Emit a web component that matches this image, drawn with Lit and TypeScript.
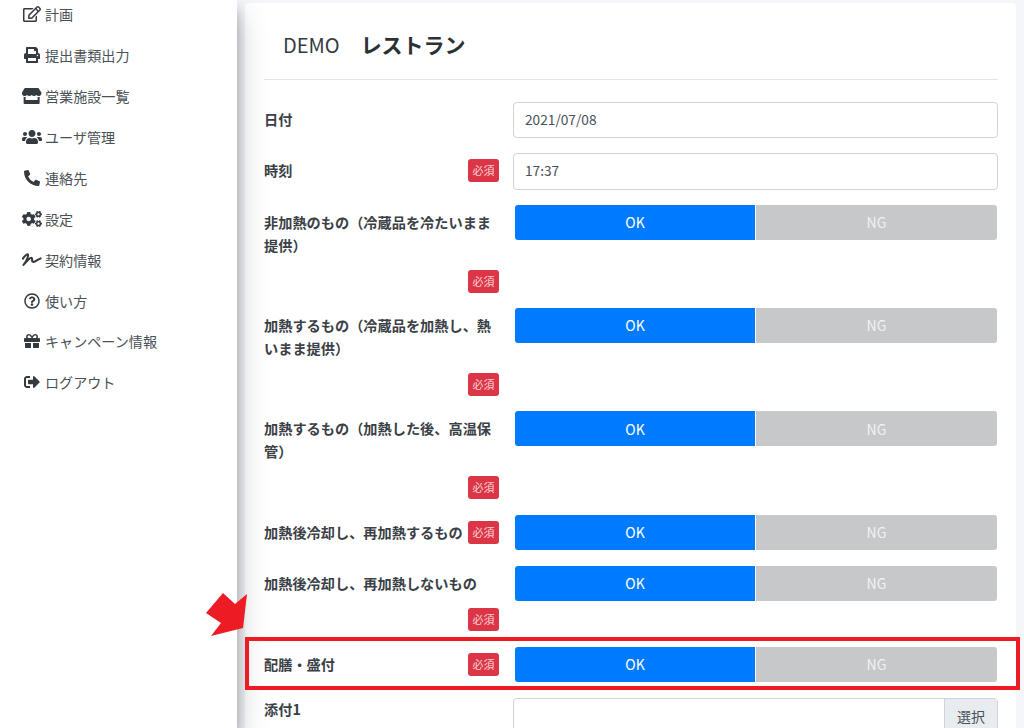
import { LitElement, html, css, svg } from "lit";
import { customElement } from "lit/decorators.js";

const PATHS: Record<string, [number, string]> = {
  edit: [576, "M402.3 344.9l32-32c5-5 13.7-1.5 13.7 5.7V464c0 26.5-21.5 48-48 48H48c-26.5 0-48-21.5-48-48V112c0-26.5 21.5-48 48-48h273.5c7.1 0 10.7 8.6 5.7 13.7l-32 32c-1.5 1.5-3.5 2.3-5.7 2.3H48v352h352V350.5c0-2.1.8-4.1 2.3-5.6zm156.6-201.8L296.3 405.7l-90.4 10c-26.2 2.9-48.5-19.2-45.6-45.6l10-90.4L432.9 17.1c22.9-22.9 59.9-22.9 82.7 0l43.2 43.2c22.9 22.9 22.9 60 .1 82.8zM460.1 174L402 115.9 216.2 301.8l-7.3 65.3 65.3-7.3L460.1 174zm64.8-79.7l-43.2-43.2c-4.1-4.1-10.8-4.1-14.8 0L436 82l58.1 58.1 30.9-30.9c4-4.2 4-10.8-.1-14.9z"],
  print: [512, "M448 192V77.25c0-8.49-3.37-16.62-9.37-22.63L393.37 9.37c-6-6-14.14-9.37-22.63-9.37H96C78.33 0 64 14.33 64 32v160c-35.35 0-64 28.65-64 64v112c0 8.84 7.16 16 16 16h48v96c0 17.67 14.33 32 32 32h320c17.67 0 32-14.33 32-32v-96h48c8.84 0 16-7.16 16-16V256c0-35.35-28.65-64-64-64zm-64 256H128v-96h256v96zm0-224H128V64h192v48c0 8.84 7.16 16 16 16h48v96zm48 72c-13.25 0-24-10.75-24-24 0-13.26 10.75-24 24-24s24 10.74 24 24c0 13.25-10.75 24-24 24z"],
  store: [616, "M602 118.6L537.1 15C531.3 5.7 521 0 510 0H106C95 0 84.7 5.7 78.9 15L14 118.6c-33.9 54.1-3.9 129.3 59.4 137.9 4.6.6 9.2.9 13.7.9 29.9 0 56.4-13.1 74.6-33.4 18.2 20.3 44.8 33.4 74.6 33.4 29.9 0 56.4-13.1 74.6-33.4 18.2 20.3 44.8 33.4 74.6 33.4 30 0 56.4-13.1 74.6-33.4 18.3 20.3 44.8 33.4 74.6 33.4 4.6 0 9.1-.3 13.7-.9 63.5-8.5 93.6-83.7 59.6-137.9zM529.5 288c-10 0-19.9-1.5-29.5-3.8V384H116v-99.8c-9.6 2.2-19.5 3.8-29.5 3.8-6 0-12.1-.4-18-1.2-5.6-.8-11.1-2.1-16.4-3.6V480c0 17.7 14.3 32 32 32h448c17.7 0 32-14.3 32-32V283.2c-5.4 1.6-10.8 2.9-16.4 3.6-6.1.8-12.1 1.2-18.2 1.2z"],
  users: [640, "M96 224c35.3 0 64-28.7 64-64s-28.7-64-64-64-64 28.7-64 64 28.7 64 64 64zm448 0c35.3 0 64-28.7 64-64s-28.7-64-64-64-64 28.7-64 64 28.7 64 64 64zm32 32h-64c-17.6 0-33.5 7.1-45.1 18.6 40.3 22.1 68.9 62 75.1 109.4h66c17.7 0 32-14.3 32-32v-32c0-35.3-28.7-64-64-64zm-256 0c61.9 0 112-50.1 112-112S381.9 32 320 32 208 82.1 208 144s50.1 112 112 112zm76.8 32h-8.3c-20.8 10-43.9 16-68.5 16s-47.6-6-68.5-16h-8.3C179.6 288 128 339.6 128 403.2V432c0 26.5 21.5 48 48 48h288c26.5 0 48-21.5 48-48v-28.8c0-63.6-51.6-115.2-115.2-115.2zm-223.7-13.4C161.5 263.1 145.6 256 128 256H64c-35.3 0-64 28.7-64 64v32c0 17.7 14.3 32 32 32h65.9c6.3-47.4 34.9-87.3 75.2-109.4z"],
  phone: [512, "M497.39 361.8l-112-48a24 24 0 0 0-28 6.9l-49.6 60.6A370.66 370.66 0 0 1 130.6 204.11l60.6-49.6a23.94 23.94 0 0 0 6.9-28l-48-112A24.16 24.16 0 0 0 122.6.61l-104 24A24 24 0 0 0 0 48c0 256.5 207.9 464 464 464a24 24 0 0 0 23.4-18.6l24-104a24.29 24.29 0 0 0-14.01-27.6z"],
  cogs: [640, "M512.1 191l-8.2 14.3c-3 5.3-9.4 7.5-15.1 5.4-11.8-4.4-22.6-10.7-32.1-18.6-4.6-3.8-5.8-10.5-2.8-15.7l8.2-14.3c-6.9-8-12.3-17.3-15.9-27.4h-16.5c-6 0-11.2-4.3-12.2-10.3-2-12-2.1-24.6 0-37.1 1-6 6.2-10.4 12.2-10.4h16.5c3.6-10.1 9-19.4 15.9-27.4l-8.2-14.3c-3-5.2-1.9-11.9 2.8-15.7 9.5-7.9 20.4-14.2 32.1-18.6 5.7-2.1 12.1.1 15.1 5.4l8.2 14.3c10.5-1.9 21.2-1.9 31.7 0L552 6.3c3-5.3 9.4-7.5 15.1-5.4 11.8 4.4 22.6 10.7 32.1 18.6 4.6 3.8 5.8 10.5 2.8 15.7l-8.2 14.3c6.9 8 12.3 17.3 15.9 27.4h16.5c6 0 11.2 4.3 12.2 10.3 2 12 2.1 24.6 0 37.1-1 6-6.2 10.4-12.2 10.4h-16.5c-3.6 10.1-9 19.4-15.9 27.4l8.2 14.3c3 5.2 1.9 11.9-2.8 15.7-9.5 7.9-20.4 14.2-32.1 18.6-5.7 2.1-12.1-.1-15.1-5.4l-8.2-14.3c-10.4 1.9-21.2 1.9-31.7 0zm-10.5-58.8c38.5 29.6 82.4-14.3 52.8-52.8-38.5-29.7-82.4 14.3-52.8 52.8zM386.3 286.1l33.7 16.8c10.1 5.8 14.5 18.1 10.5 29.1-8.9 24.2-26.4 46.4-42.6 65.8-7.4 8.9-20.2 11.1-30.3 5.3l-29.1-16.8c-16 13.7-34.6 24.6-54.9 31.7v33.6c0 11.6-8.3 21.6-19.7 23.6-24.6 4.2-50.4 4.4-75.9 0-11.5-2-20-11.9-20-23.6V418c-20.3-7.2-38.9-18-54.9-31.7L74 403c-10 5.8-22.9 3.6-30.3-5.3-16.2-19.4-33.3-41.6-42.2-65.7-4-10.9.4-23.2 10.5-29.1l33.3-16.8c-3.9-20.9-3.9-42.4 0-63.4L12 205.8c-10.1-5.8-14.6-18.1-10.5-29 8.9-24.2 26-46.4 42.2-65.8 7.4-8.9 20.2-11.1 30.3-5.3l29.1 16.8c16-13.7 34.6-24.6 54.9-31.7V57.1c0-11.5 8.2-21.5 19.6-23.5 24.6-4.2 50.5-4.4 76-.1 11.5 2 20 11.9 20 23.6v33.6c20.3 7.2 38.9 18 54.9 31.7l29.1-16.8c10-5.8 22.9-3.6 30.3 5.3 16.2 19.4 33.2 41.6 42.1 65.8 4 10.9.1 23.2-10 29.1l-33.7 16.8c3.9 21 3.9 42.5 0 63.5zm-117.6 21.1c59.2-77-28.7-164.9-105.7-105.7-59.2 77 28.7 164.9 105.7 105.7zm243.4 182.7l-8.2 14.3c-3 5.3-9.4 7.5-15.1 5.4-11.8-4.4-22.6-10.7-32.1-18.6-4.6-3.8-5.8-10.5-2.8-15.7l8.2-14.3c-6.9-8-12.3-17.3-15.9-27.4h-16.5c-6 0-11.2-4.3-12.2-10.3-2-12-2.1-24.6 0-37.1 1-6 6.2-10.4 12.2-10.4h16.5c3.6-10.1 9-19.4 15.9-27.4l-8.2-14.3c-3-5.2-1.9-11.9 2.8-15.7 9.5-7.9 20.4-14.2 32.1-18.6 5.7-2.1 12.1.1 15.1 5.4l8.2 14.3c10.5-1.9 21.2-1.9 31.7 0l8.2-14.3c3-5.3 9.4-7.5 15.1-5.4 11.8 4.4 22.6 10.7 32.1 18.6 4.6 3.8 5.8 10.5 2.8 15.7l-8.2 14.3c6.9 8 12.3 17.3 15.9 27.4h16.5c6 0 11.2 4.3 12.2 10.3 2 12 2.1 24.6 0 37.1-1 6-6.2 10.4-12.2 10.4h-16.5c-3.6 10.1-9 19.4-15.9 27.4l8.2 14.3c3 5.2 1.9 11.9-2.8 15.7-9.5 7.9-20.4 14.2-32.1 18.6-5.7 2.1-12.1-.1-15.1-5.4l-8.2-14.3c-10.4 1.9-21.2 1.9-31.7 0zM501.6 431c38.5 29.6 82.4-14.3 52.8-52.8-38.5-29.6-82.4 14.3-52.8 52.8z"],
  question: [512, "M256 8C119.043 8 8 119.083 8 256c0 136.997 111.043 248 248 248s248-111.003 248-248C504 119.083 392.957 8 256 8zm0 448c-110.532 0-200-89.431-200-200 0-110.495 89.472-200 200-200 110.491 0 200 89.471 200 200 0 110.53-89.431 200-200 200zm107.244-255.2c0 67.052-72.421 68.084-72.421 92.863V300c0 6.627-5.373 12-12 12h-45.647c-6.627 0-12-5.373-12-12v-8.659c0-35.745 27.1-50.034 47.579-61.516 17.561-9.845 28.324-16.541 28.324-29.579 0-17.246-21.999-28.693-39.784-28.693-23.189 0-33.894 10.977-48.942 29.969-4.057 5.12-11.46 6.071-16.666 2.124l-27.824-21.098c-5.107-3.872-6.251-11.066-2.644-16.363C184.846 131.491 214.94 112 261.794 112c49.071 0 101.45 38.304 101.45 88.8zM298 368c0 23.159-18.841 42-42 42s-42-18.841-42-42 18.841-42 42-42 42 18.841 42 42z"],
  gift: [512, "M32 448c0 17.7 14.3 32 32 32h160V320H32v128zm256 32h160c17.7 0 32-14.3 32-32V320H288v160zm192-320h-42.1c6.2-12.1 10.1-25.5 10.1-40 0-48.5-39.5-88-88-88-41.6 0-68.5 21.3-103 68.3-34.5-47-61.4-68.3-103-68.3-48.5 0-88 39.5-88 88 0 14.5 3.8 27.9 10.1 40H32c-17.7 0-32 14.3-32 32v80c0 8.8 7.2 16 16 16h480c8.8 0 16-7.2 16-16v-80c0-17.7-14.3-32-32-32zm-326.1 0c-22.1 0-40-17.9-40-40s17.9-40 40-40c19.9 0 34.6 3.3 86.1 80h-86.1zm206.1 0h-86.1c51.4-76.5 65.7-80 86.1-80 22.1 0 40 17.9 40 40s-17.9 40-40 40z"],
  signout: [512, "M497 273L329 441c-15 15-41 4.5-41-17v-96H152c-13.3 0-24-10.7-24-24v-96c0-13.3 10.7-24 24-24h136V88c0-21.4 25.9-32 41-17l168 168c9.3 9.4 9.3 24.6 0 34zM192 436v-40c0-6.6-5.4-12-12-12H96c-17.7 0-32-14.3-32-32V160c0-17.7 14.3-32 32-32h84c6.6 0 12-5.4 12-12V76c0-6.6-5.4-12-12-12H96c-53 0-96 43-96 96v192c0 53 43 96 96 96h84c6.6 0 12-5.4 12-12z"],
};

const icon = (name: string) => {
  if (name === "signature") {
    return html`<svg class="ic sig" viewBox="0 0 18 12" fill="none" stroke="currentColor" stroke-width="1.9" stroke-linecap="round" stroke-linejoin="round">${svg`<path d="M.8 5.2C3 1.8 5.6.2 5.6 1.8 5.6 4 3.2 8.6 1.4 11 4 8 8 3.6 9 4.6c1 1.4-.6 3.6 1.5 3.6 2 0 4.4-2.6 6.7-3.2"/>`}</svg>`;
  }
  const [w, d] = PATHS[name];
  return html`<svg class="ic" viewBox="0 0 ${w} 512" fill="currentColor">${svg`<path d=${d} />`}</svg>`;
};

const NAV: [string, string][] = [
  ["edit", "計画"],
  ["print", "提出書類出力"],
  ["store", "営業施設一覧"],
  ["users", "ユーザ管理"],
  ["phone", "連絡先"],
  ["cogs", "設定"],
  ["signature", "契約情報"],
  ["question", "使い方"],
  ["gift", "キャンペーン情報"],
  ["signout", "ログアウト"],
];

const ROWS: [string, boolean][] = [
  ["非加熱のもの（冷蔵品を冷たいまま提供）", true],
  ["加熱するもの（冷蔵品を加熱し、熱いまま提供）", true],
  ["加熱するもの（加熱した後、高温保管）", true],
  ["加熱後冷却し、再加熱するもの", false],
  ["加熱後冷却し、再加熱しないもの", false],
  ["配膳・盛付", false],
];

@customElement("app-root")
export class AppRoot extends LitElement {
  static styles = css`
    :host {
      display: block;
      position: relative;
      width: 1024px;
      height: 728px;
      overflow: hidden;
      background: #f4f6f9;
      font-family: "Noto Sans CJK JP", "Noto Sans", sans-serif;
      font-size: 14px;
      color: #343a40;
    }
    .page {
      display: flex;
      height: 100%;
    }
    .side {
      flex: 0 0 237px;
      background: #fff;
      position: relative;
      z-index: 2;
      box-shadow: 0 14px 28px rgba(0, 0, 0, 0.25), 0 10px 10px rgba(0, 0, 0, 0.22);
    }
    .nav {
      list-style: none;
      margin: -6.1px 0 0;
      padding: 0;
    }
    .nav li {
      display: flex;
      align-items: center;
      height: 40.9px;
      padding-left: 22px;
      font-size: 14.1px;
      color: #4a5056;
    }
    .icbox {
      flex: 0 0 20px;
      display: flex;
      justify-content: center;
      margin-right: 3px;
      color: #343a40;
    }
    .ic {
      height: 16px;
      display: block;
    }
    .ic.sig {
      height: 13px;
    }
    .main {
      flex: 1;
      padding: 3px 8px 0;
      min-width: 0;
    }
    .card {
      background: #fff;
      border-radius: 4px;
      padding: 0 18px 0 19px;
      height: 800px;
    }
    .head {
      display: flex;
      align-items: center;
      gap: 21px;
      height: 77px;
      padding: 16px 0 10px 19px;
      box-sizing: border-box;
      font-size: 20px;
      border-bottom: 1px solid #e3e5e7;
      margin-bottom: 22px;
    }
    .head b {
      font-size: 21px;
      font-weight: 700;
      color: #2c3136;
    }
    .row {
      display: grid;
      grid-template-columns: 235px 1fr;
      column-gap: 14px;
      margin-bottom: 16px;
    }
    .row.input {
      margin-bottom: 15px;
    }
    .row.tall {
      margin-bottom: 15.33px;
    }
    .label {
      display: flex;
      flex-wrap: wrap;
      justify-content: space-between;
      align-items: center;
      align-content: flex-start;
      row-gap: 13px;
      padding-top: 6px;
      font-size: 14.2px;
      font-weight: 700;
      line-height: 23px;
      color: #3a4046;
    }
    .label.top {
      padding-top: 0;
    }
    .badge {
      margin-left: auto;
      width: 31px;
      height: 23px;
      border-radius: 3px;
      background: #dc3545;
      color: #f6d5d8;
      font-size: 11px;
      font-weight: 400;
      line-height: 23px;
      text-align: center;
    }
    .field {
      height: 36.3px;
      box-sizing: border-box;
      border: 1px solid #ced4da;
      border-radius: 4px;
      background: #fff;
      padding: 0 11px 2px;
      display: flex;
      align-items: center;
      font-size: 13.7px;
      color: #495057;
    }
    .file {
      padding: 0;
      justify-content: flex-end;
    }
    .file span {
      width: 52px;
      height: 100%;
      background: #e9ecef;
      border-left: 1px solid #ced4da;
      display: flex;
      align-items: center;
      justify-content: center;
      font-size: 14px;
    }
    .toggle {
      display: flex;
      height: 35px;
      margin: 0 1px 0 2px;
      color: #fff;
      gap: 1px;
    }
    .toggle div {
      display: flex;
      align-items: center;
      justify-content: center;
    }
    .ok {
      flex: 0 0 240px;
      background: #007bff;
      border-radius: 3px 0 0 3px;
    }
    .ng {
      flex: 1;
      background: #c6c8ca;
      color: #f1f2f2;
      border-radius: 0 3px 3px 0;
    }
    .box {
      position: absolute;
      left: 245px;
      top: 637px;
      width: 775px;
      height: 53px;
      box-sizing: border-box;
      border: 4px solid #ed1c24;
      z-index: 3;
    }
    .arrow {
      position: absolute;
      left: 200px;
      top: 588px;
      z-index: 3;
    }
  `;

  render() {
    const badge = html`<span class="badge">必須</span>`;
    return html`
      <div class="page">
        <aside class="side">
          <ul class="nav">
            ${NAV.map(([i, t]) => html`<li><span class="icbox">${icon(i)}</span>${t}</li>`)}
          </ul>
        </aside>
        <main class="main">
          <section class="card">
            <header class="head"><span>DEMO</span><b>レストラン</b></header>
            <div class="row input">
              <div class="label"><span>日付</span></div>
              <div class="field">2021/07/08</div>
            </div>
            <div class="row input">
              <div class="label"><span>時刻</span>${badge}</div>
              <div class="field">17:37</div>
            </div>
            ${ROWS.map(
              ([t, tall]) => html`
                <div class="row ${tall ? "tall" : ""}">
                  <div class="label"><span>${t}</span>${badge}</div>
                  <div class="toggle"><div class="ok">OK</div><div class="ng">NG</div></div>
                </div>
              `
            )}
            <div class="row input">
              <div class="label top"><span>添付1</span></div>
              <div class="field file"><span>選択</span></div>
            </div>
          </section>
        </main>
      </div>
      <div class="box"></div>
      <svg class="arrow" width="50" height="52" viewBox="200 588 50 52">
        <polygon fill="#ed1c24" points="223,593 235,604 247,594 243,628 211,636 221,623 206,613"></polygon>
      </svg>
    `;
  }
}
